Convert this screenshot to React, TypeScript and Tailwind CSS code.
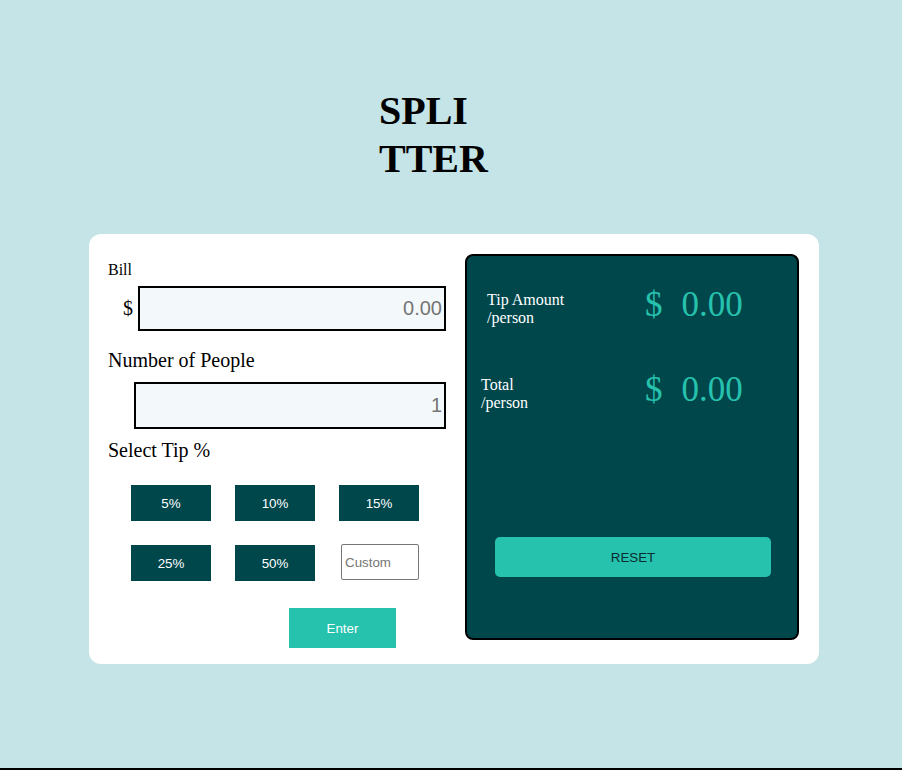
import { useState } from "react";

const serif = "font-['Liberation_Serif',serif]";
const sans = "font-['Liberation_Sans',Arial,sans-serif]";

const tips = ["5%", "10%", "15%", "25%", "50%"];

function Amount({ value }: { value: string }) {
  return (
    <div className={`flex text-[35px] leading-[40px] text-[#26c2ae] ${serif}`}>
      <span>$</span>
      <span className="ml-[19px]">{value}</span>
    </div>
  );
}

export default function App() {
  const [bill, setBill] = useState("");
  const [people, setPeople] = useState("");
  const [custom, setCustom] = useState("");

  return (
    <div className="h-[770px] w-full border-b-2 border-black bg-[#c5e4e7]">
      <h1
        className={`ml-[379px] w-[110px] break-all pt-[87px] text-[40px] font-bold leading-[48px] text-black ${serif}`}
      >
        SPLITTER
      </h1>

      <div className="mt-[51px] ml-[89px] flex w-[730px] items-start gap-[19px] rounded-[12px] bg-white pt-[20px] pr-[20px] pb-[16px] pl-[19px]">
        {/* left side: inputs */}
        <div className="flex w-[338px] flex-col">
          <label className={`mt-[7px] text-[16px] leading-[18px] text-black ${serif}`}>
            Bill
          </label>
          <div className="mt-[7px] flex items-center pl-[15px]">
            <span className={`text-[20px] leading-[23px] ${serif}`}>$</span>
            <input
              value={bill}
              onChange={(e) => setBill(e.target.value)}
              placeholder="0.00"
              className={`ml-[5px] h-[45px] w-[308px] border-2 border-black bg-[#f3f8fb] pr-[2px] text-right text-[20px] outline-none placeholder:text-[#757575] ${sans}`}
            />
          </div>

          <label className={`mt-[18px] text-[20px] leading-[23px] text-black ${serif}`}>
            Number of People
          </label>
          <input
            value={people}
            onChange={(e) => setPeople(e.target.value)}
            placeholder="1"
            className={`mt-[10px] ml-[26px] h-[47px] w-[312px] border-2 border-black bg-[#f3f8fb] pr-[2px] text-right text-[20px] outline-none placeholder:text-[#757575] ${sans}`}
          />

          <label className={`mt-[10px] text-[20px] leading-[23px] text-black ${serif}`}>
            Select Tip %
          </label>
          <div className="mt-[23px] ml-[23px] grid grid-cols-[80px_80px_80px] gap-[24px]">
            {tips.map((t) => (
              <button
                key={t}
                className={`h-[36px] w-[80px] bg-[#00474b] pt-px text-[13.33px] text-white ${sans}`}
              >
                {t}
              </button>
            ))}
            <input
              value={custom}
              onChange={(e) => setCustom(e.target.value)}
              placeholder="Custom"
              className={`-mt-px ml-[2px] h-[36px] w-[78px] rounded-[2px] border border-[#767676] px-[3px] text-[13.33px] outline-none placeholder:text-[#757575] ${sans}`}
            />
          </div>

          <button
            className={`mt-[27px] ml-[181px] h-[40px] w-[107px] bg-[#26c2ae] pt-px text-[13.33px] text-white ${sans}`}
          >
            Enter
          </button>
        </div>

        {/* right side: results */}
        <div className="flex h-[386px] w-[334px] flex-col rounded-[8px] border-2 border-black bg-[#00474b] pt-[29px]">
          <div className="flex items-start">
            <div className={`mt-[6px] ml-[20px] w-[158px] text-[16px] leading-[18px] text-white ${serif}`}>
              <div>Tip Amount</div>
              <div>/person</div>
            </div>
            <Amount value="0.00" />
          </div>

          <div className="mt-[43px] flex items-start">
            <div className={`mt-[6px] ml-[14px] w-[164px] text-[16px] leading-[18px] text-white ${serif}`}>
              <div>Total</div>
              <div>/person</div>
            </div>
            <Amount value="0.00" />
          </div>

          <button
            className={`mt-[125px] ml-[28px] h-[40px] w-[276px] rounded-[5px] bg-[#26c2ae] pt-px text-[13.33px] text-[#0a2c30] ${sans}`}
          >
            RESET
          </button>
        </div>
      </div>
    </div>
  );
}
